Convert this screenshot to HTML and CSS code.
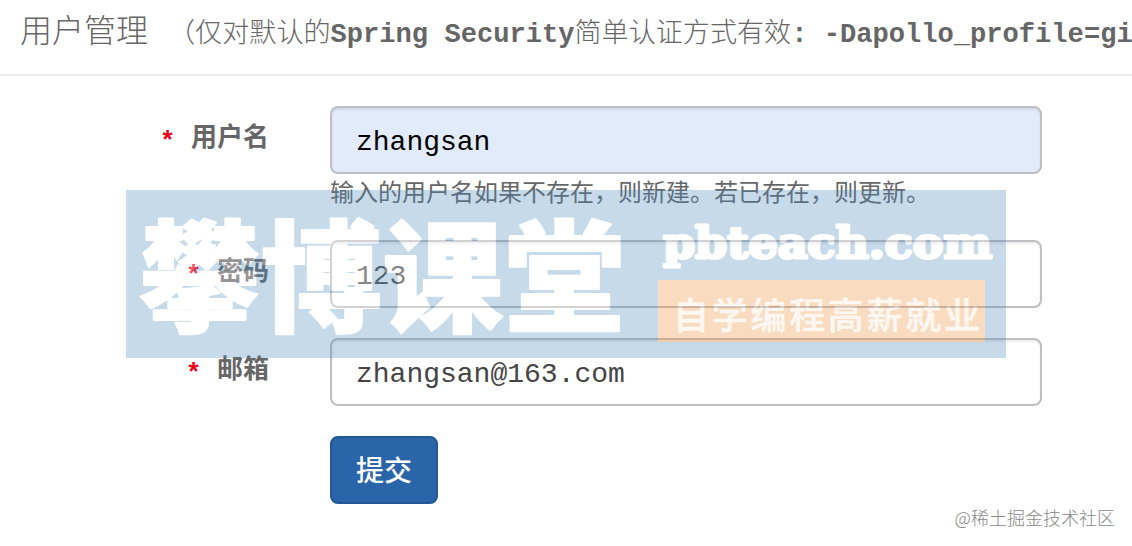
FILE: index.html
```
<!DOCTYPE html>
<html lang="zh-CN">

<head>
    <meta charset="UTF-8">
    <meta name="viewport" content="width=device-width, initial-scale=1.0">
    <title>用户管理</title>
    <link rel="stylesheet" href="styles.css">
</head>

<body>

    <header class="panel-heading">
        <span class="title">用户管理</span>
        <small class="subtitle">（仅对默认的<b>Spring Security</b>简单认证方式有效<b>: -Dapollo_profile=gi</b></small>
    </header>

    <form class="user-form">
        <div class="form-group">
            <label class="control-label" for="username"><span class="required">*</span>用户名</label>
            <div class="field">
                <input class="form-control autofill" id="username" type="text" value="zhangsan">
                <small class="help">输入的用户名如果不存在，则新建。若已存在，则更新。</small>
            </div>
        </div>
        <div class="form-group">
            <label class="control-label" for="password"><span class="required">*</span>密码</label>
            <div class="field">
                <input class="form-control" id="password" type="text" value="123">
            </div>
        </div>
        <div class="form-group">
            <label class="control-label" for="email"><span class="required">*</span>邮箱</label>
            <div class="field">
                <input class="form-control email" id="email" type="text" value="zhangsan@163.com">
            </div>
        </div>
        <button class="btn" type="button">提交</button>
    </form>

    <!-- 水印 -->
    <svg class="banner" width="880" height="168" viewBox="0 0 880 168">
        <rect width="880" height="168" fill="#4887bc" />
        <rect x="532" y="90" width="327" height="62" fill="#ee8a2d" />
        <text class="banner-name" x="13" y="132" textLength="486">攀博课堂</text>
        <text class="banner-site" x="537" y="68" textLength="329" lengthAdjust="spacingAndGlyphs">pbteach.com</text>
        <text class="banner-slogan" x="547" y="139" textLength="307">自学编程高薪就业</text>
    </svg>
    <div class="credit">@稀土掘金技术社区</div>

</body>

</html>
```
FILE: styles.css
```
* {
    box-sizing: border-box;
}

body {
    position: relative;
    height: 546px;
    margin: 0;
    overflow: hidden;
    background-color: #fff;
    color: #666;
    font-family: 'Liberation Mono', 'Noto Sans CJK SC', monospace;
}

.panel-heading {
    display: flex;
    align-items: baseline;
    height: 76px;
    padding: 5px 0 0 20px;
    border-bottom: 2px solid #ebebeb;
    overflow: hidden;
    white-space: nowrap;
    font-weight: 300;
    font-family: 'Noto Sans CJK SC', sans-serif;
}

.title {
    font-size: 32px;
}

.subtitle {
    margin-left: 20px;
    font-size: 27.1px;
}

.subtitle b {
    font-family: 'Liberation Mono', monospace;
    font-weight: bold;
}

.user-form {
    padding-top: 30px;
}

.form-group {
    display: flex;
    margin-bottom: 30px;
}

.control-label {
    width: 269px;
    margin-right: 61px;
    padding-top: 14px;
    font-size: 26px;
    line-height: 38px;
    font-weight: bold;
    text-align: right;
}

.required {
    margin-right: 15.6px;
    color: #f00018;
    vertical-align: -3px;
    line-height: 1;
}

.field {
    width: 712px;
}

.form-control {
    display: block;
    width: 100%;
    height: 68px;
    padding: 4px 24px 0;
    border: 2px solid #bfbfc3;
    border-radius: 8px;
    background-color: #fff;
    box-shadow: inset 0 2px 2px rgba(0, 0, 0, 0.075);
    color: #555;
    font-family: 'Liberation Mono', monospace;
    font-size: 28px;
}

.autofill {
    background-color: #e2ebfb;
    color: #000;
}

.email {
    color: #444;
}

.help {
    display: block;
    height: 36px;
    font-family: 'Noto Sans CJK SC', sans-serif;
    font-size: 24px;
    line-height: 33px;
}

.btn {
    display: block;
    width: 108px;
    height: 68px;
    margin-left: 330px;
    padding: 0 0 2px;
    border: 2px solid #235794;
    border-radius: 8px;
    background-color: #2965a8;
    color: #fff;
    font-family: 'Noto Sans CJK SC', sans-serif;
    font-size: 28px;
    font-weight: 500;
}

.banner {
    position: absolute;
    left: 126px;
    top: 190px;
    opacity: 0.3;
    pointer-events: none;
}

.banner text {
    fill: #fff;
    stroke: #fff;
    stroke-linejoin: round;
    font-family: 'Noto Sans CJK SC', sans-serif;
    font-weight: 900;
}

.banner .banner-name {
    font-size: 121px;
    stroke-width: 2px;
}

.banner .banner-site {
    font-family: 'DejaVu Serif', serif;
    font-size: 42px;
    stroke-width: 3px;
}

.banner .banner-slogan {
    font-size: 36px;
    font-weight: 500;
    stroke-width: 0.5px;
    opacity: 0.8;
}

.credit {
    position: absolute;
    right: 17px;
    bottom: 15px;
    color: #888;
    font-family: 'Noto Sans CJK SC', sans-serif;
    font-size: 18px;
    font-weight: 300;
    line-height: 28px;
}
```
